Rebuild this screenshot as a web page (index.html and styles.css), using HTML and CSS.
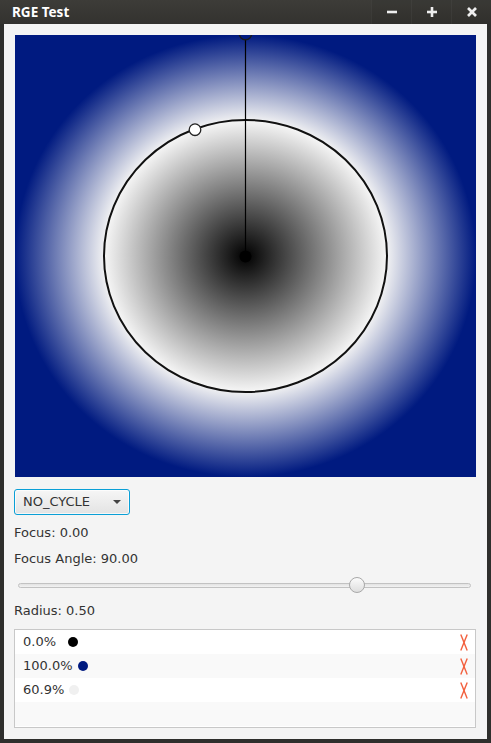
FILE: index.html
```html
<!DOCTYPE html>
<html>
<head>
<meta charset="utf-8">
<title>RGE Test</title>
<link rel="stylesheet" href="styles.css">
</head>
<body>
<div class="window">
  <div class="titlebar">
    <div class="title">RGE Test</div>
    <div class="wbtns">
      <div class="wbtn"><svg width="12" height="12" viewBox="0 0 12 12"><line x1="1" y1="6" x2="11" y2="6" /></svg></div>
      <div class="wbtn"><svg width="12" height="12" viewBox="0 0 12 12"><line x1="1" y1="6" x2="11" y2="6" /><line x1="6" y1="1" x2="6" y2="11" /></svg></div>
      <div class="wbtn"><svg width="12" height="12" viewBox="0 0 12 12"><line x1="2" y1="2" x2="10" y2="10" /><line x1="10" y1="2" x2="2" y2="10" /></svg></div>
    </div>
  </div>
  <div class="content">
    <svg class="canvas" width="461" height="442" viewBox="0 0 461 442">
      <defs>
        <radialGradient id="rg" cx="0.5" cy="0.5" r="0.5" fx="0.5" fy="0.5">
          <stop offset="0" stop-color="#000000"/>
          <stop offset="0.609" stop-color="#f4f4f4"/>
          <stop offset="1" stop-color="#001a80"/>
        </radialGradient>
      </defs>
      <rect x="0" y="0" width="461" height="442" fill="url(#rg)"/>
      <ellipse cx="230.5" cy="221" rx="141.5" ry="136" fill="none" stroke="#111" stroke-width="2"/>
      <line x1="230.5" y1="0" x2="230.5" y2="221" stroke="#000" stroke-width="1.2"/>
      <circle cx="230.5" cy="-1.5" r="6.2" fill="#001a80" stroke="#1a1a1a" stroke-width="1.4"/>
      <circle cx="230.5" cy="221.5" r="6" fill="#000"/>
      <circle cx="180" cy="94.7" r="5.8" fill="#fff" stroke="#222" stroke-width="1.3"/>
    </svg>

    <div class="combo">
      <span class="combo-text">NO_CYCLE</span>
      <span class="combo-arrow"></span>
    </div>

    <div class="label">Focus: 0.00</div>
    <div class="label">Focus Angle: 90.00</div>

    <div class="slider">
      <div class="track"></div>
      <div class="rail">
        <div class="thumb" style="left: 75.7%"></div>
      </div>
    </div>

    <div class="label">Radius: 0.50</div>

    <div class="list">
      <div class="row">
        <span class="pct">0.0%</span><span class="dot dot-first" style="background:#000000"></span>
        <svg class="del" width="8" height="17" viewBox="0 0 8 17"><line x1="0.8" y1="0.5" x2="7.2" y2="16.5"/><line x1="7.2" y1="0.5" x2="0.8" y2="16.5"/></svg>
      </div>
      <div class="row">
        <span class="pct">100.0%</span><span class="dot" style="background:#001a80"></span>
        <svg class="del" width="8" height="17" viewBox="0 0 8 17"><line x1="0.8" y1="0.5" x2="7.2" y2="16.5"/><line x1="7.2" y1="0.5" x2="0.8" y2="16.5"/></svg>
      </div>
      <div class="row">
        <span class="pct">60.9%</span><span class="dot" style="background:#f0f0f0"></span>
        <svg class="del" width="8" height="17" viewBox="0 0 8 17"><line x1="0.8" y1="0.5" x2="7.2" y2="16.5"/><line x1="7.2" y1="0.5" x2="0.8" y2="16.5"/></svg>
      </div>
      <div class="row"></div>
    </div>
  </div>
</div>
</body>
</html>
```
FILE: styles.css
```css
html, body {
  margin: 0;
  padding: 0;
  background: #2e2e2c;
}
body {
  width: 491px;
  height: 743px;
  overflow: hidden;
  font-family: "DejaVu Sans", sans-serif;
  font-size: 13px;
  color: #333333;
}
.window {
  display: flex;
  flex-direction: column;
  width: 491px;
  height: 743px;
}
.titlebar {
  height: 24px;
  display: flex;
  align-items: center;
  background: linear-gradient(#3d3c38, #33322f);
  flex: none;
}
.title {
  font-family: "Noto Sans", sans-serif;
  font-weight: bold;
  font-size: 13.5px;
  color: #ffffff;
  padding-left: 12px;
  flex: 1;
  line-height: 24px;
}
.wbtns {
  display: flex;
  height: 24px;
}
.wbtn {
  width: 40px;
  height: 24px;
  display: flex;
  align-items: center;
  justify-content: center;
  background: rgba(0, 0, 0, 0.05);
  border-left: 1px solid rgba(255, 255, 255, 0.04);
  box-sizing: border-box;
}
.wbtn svg line {
  stroke: #eeeeee;
  stroke-width: 2.6;
}
.content {
  margin: 0 4px 4px 4px;
  background: #f4f4f4;
  padding: 11px 11px 11px 11px;
  display: flex;
  flex-direction: column;
  flex: 1;
}
.canvas {
  display: block;
  flex: none;
}
.combo {
  margin-top: 12px;
  margin-left: -1px;
  width: 116px;
  height: 26px;
  box-sizing: border-box;
  border: 1px solid #0a9fd6;
  border-radius: 3px;
  background: linear-gradient(#f6f6f6, #e3e3e3);
  box-shadow: inset 0 0 0 1px rgba(255, 255, 255, 0.7);
  display: flex;
  align-items: center;
  padding-left: 8px;
  padding-right: 8px;
}
.combo-text {
  flex: 1;
  line-height: 16px;
  color: #333;
}
.combo-arrow {
  width: 0;
  height: 0;
  border-left: 4px solid transparent;
  border-right: 4px solid transparent;
  border-top: 4px solid #444;
}
.label {
  margin-top: 10px;
  margin-left: -1px;
  line-height: 16px;
  height: 16px;
}
.slider {
  margin-top: 10px;
  height: 16px;
  position: relative;
  display: flex;
  align-items: center;
}
.track {
  flex: 1;
  margin: 0 5px 0 3px;
  height: 5px;
  border-radius: 3px;
  border: 1px solid #c2c2c2;
  background: linear-gradient(#e2e2e2, #f2f2f2);
  box-sizing: border-box;
}
.rail {
  position: absolute;
  left: 11px;
  right: 13px;
  top: 0;
  bottom: 0;
}
.thumb {
  position: absolute;
  top: 0;
  width: 16px;
  height: 16px;
  margin-left: -8px;
  border-radius: 50%;
  box-sizing: border-box;
  border: 1px solid #a8a8a8;
  background: linear-gradient(#fbfbfb, #dedede);
}
.list {
  margin-top: 10px;
  margin-left: -1px;
  border: 1px solid #c8c8c8;
  background: #ffffff;
  height: 99px;
  box-sizing: border-box;
  display: flex;
  flex-direction: column;
}
.row {
  height: 24px;
  display: flex;
  align-items: center;
  padding: 0 7px 0 8px;
  line-height: 24px;
  background: #ffffff;
  flex: none;
}
.row:nth-child(even) {
  background: #f9f9f9;
}
.pct {
  color: #333;
}
.dot {
  width: 10px;
  height: 10px;
  border-radius: 50%;
  margin-left: 5px;
}
.dot-first {
  margin-left: 12px;
}
.del {
  margin-left: auto;
}
.del line {
  stroke: #f2603e;
  stroke-width: 1.4;
}
```
